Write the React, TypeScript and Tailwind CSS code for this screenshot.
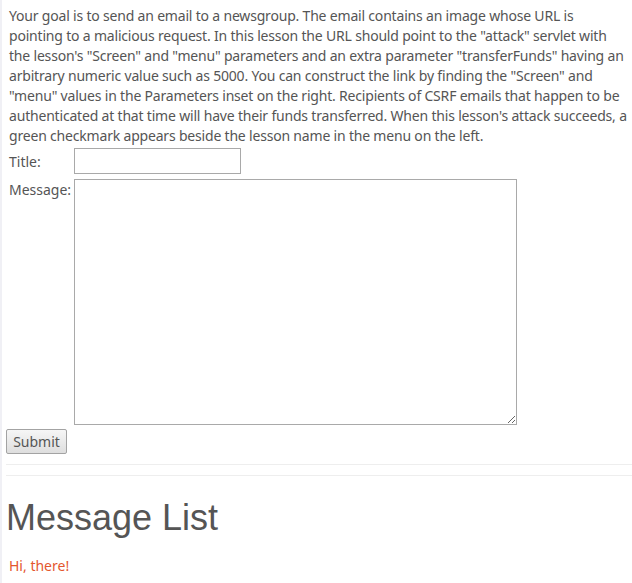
import React from 'react';

const App: React.FC = () => {
  return (
    <div className="w-[632px] h-[583px] bg-white overflow-hidden border-l-2 border-[#f0f0f5] pl-[4px] text-[14px] text-[#555] font-['Noto_Sans','Open_Sans',sans-serif]">
      <p className="pt-[6px] pl-[3px] leading-[20px] tracking-[-0.19px] whitespace-nowrap">
        Your goal is to send an email to a newsgroup. The email contains an image whose URL is<br />
        pointing to a malicious request. In this lesson the URL should point to the "attack" servlet with<br />
        the lesson's "Screen" and "menu" parameters and an extra parameter "transferFunds" having an<br />
        arbitrary numeric value such as 5000. You can construct the link by finding the "Screen" and<br />
        "menu" values in the Parameters inset on the right. Recipients of CSRF emails that happen to be<br />
        authenticated at that time will have their funds transferred. When this lesson's attack succeeds, a<br />
        green checkmark appears beside the lesson name in the menu on the left.
      </p>

      <form onSubmit={(e) => e.preventDefault()}>
        <table className="border-separate border-spacing-[2px]">
          <tbody>
            <tr>
              <td className="w-[64px] pl-[1px] pr-0 align-middle">Title:</td>
              <td className="p-0">
                <input type="text" className="block w-[167px] h-[26px] border border-[#a9a9a9] bg-white" />
              </td>
            </tr>
            <tr>
              <td className="w-[64px] pl-[1px] pr-0 pt-[3px] align-top">Message:</td>
              <td className="p-0 pt-[3px]">
                <textarea className="block w-[443px] h-[246px] border border-[#a9a9a9] bg-white resize" />
              </td>
            </tr>
          </tbody>
        </table>
        <button
          type="submit"
          className="mt-[2px] h-[25px] w-[61px] border border-[#a3a3a3] rounded-[2px] bg-gradient-to-b from-[#f6f6f6] to-[#dedede] text-[14px] text-[#555] leading-[20px]"
        >
          Submit
        </button>
      </form>

      <div className="mt-[10px] border-t border-[#eee]" />
      <div className="mt-[10px] border-t border-[#eee]" />

      <h1 className="mt-[22px] text-[36px] leading-[40px] text-[#555] font-['Liberation_Sans',Arial,sans-serif]">
        Message List
      </h1>

      <div className="mt-[18px] pl-[3px] text-[#e4572e] leading-[20px]">Hi, there!</div>
    </div>
  );
};

export default App;
